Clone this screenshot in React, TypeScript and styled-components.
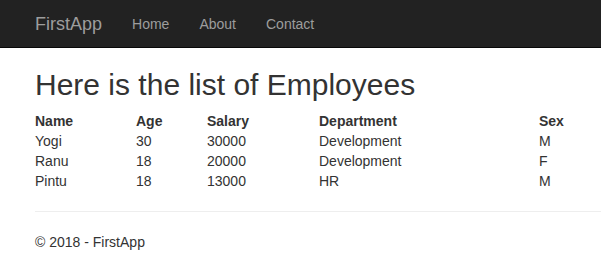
import styled, { createGlobalStyle } from 'styled-components'
import { FC, Fragment } from 'react'

const GlobalStyle = createGlobalStyle`
    html, body {
        margin: 0;
        padding: 0;
        background: #fff;
    }
    body {
        font-family: 'Liberation Sans', Arial, Helvetica, sans-serif;
        font-size: 14px;
        line-height: 1.42857143;
        color: #333;
    }
`;

const Navbar = styled.nav`
    height: 47px;
    background-color: #222;
    border-bottom: 1px solid #080808;
    display: flex;
    align-items: center;
    padding-left: 20px;
`;
const Brand = styled.a`
    font-size: 18px;
    line-height: 20px;
    color: #9d9d9d;
    padding: 0 15px;
    text-decoration: none;
`;
const NavLinks = styled.ul`
    display: flex;
    list-style: none;
    margin: 0;
    padding: 0;
`;
const NavLink = styled.a`
    display: block;
    padding: 0 15px;
    line-height: 20px;
    color: #9d9d9d;
    text-decoration: none;
`;
const Content = styled.main`
    padding: 0 0 0 35px;
`;
const Heading = styled.h2`
    margin: 20px 0 10px;
    font-size: 30px;
    font-weight: 500;
    line-height: 1.1;
    color: #333;
`;
const Table = styled.div`
    display: grid;
    grid-template-columns: 101px 71px 112px 220px 1fr;
`;
const Cell = styled.div<{ $head?: boolean }>`
    height: 20px;
    line-height: 20px;
    font-weight: ${p => (p.$head ? 'bold' : 'normal')};
    white-space: nowrap;
`;
const Rule = styled.hr`
    margin: 20px 0;
    border: 0;
    border-top: 1px solid #eee;
`;
const Footer = styled.footer`
    p {
        margin: 0 0 10px;
    }
`;

const employees = [
    { name: 'Yogi', age: 30, salary: 30000, department: 'Development', sex: 'M' },
    { name: 'Ranu', age: 18, salary: 20000, department: 'Development', sex: 'F' },
    { name: 'Pintu', age: 18, salary: 13000, department: 'HR', sex: 'M' },
];

const App: FC = () => {
    return (
        <>
            <GlobalStyle />
            <Navbar>
                <Brand href="#">FirstApp</Brand>
                <NavLinks>
                    <li><NavLink href="#">Home</NavLink></li>
                    <li><NavLink href="#">About</NavLink></li>
                    <li><NavLink href="#">Contact</NavLink></li>
                </NavLinks>
            </Navbar>
            <Content>
                <Heading>Here is the list of Employees</Heading>
                <Table>
                    <Cell $head>Name</Cell>
                    <Cell $head>Age</Cell>
                    <Cell $head>Salary</Cell>
                    <Cell $head>Department</Cell>
                    <Cell $head>Sex</Cell>
                    {employees.map(e => (
                        <Fragment key={e.name}>
                            <Cell>{e.name}</Cell>
                            <Cell>{e.age}</Cell>
                            <Cell>{e.salary}</Cell>
                            <Cell>{e.department}</Cell>
                            <Cell>{e.sex}</Cell>
                        </Fragment>
                    ))}
                </Table>
                <Rule />
                <Footer>
                    <p>&copy; 2018 - FirstApp</p>
                </Footer>
            </Content>
        </>
    )
}
export default App
